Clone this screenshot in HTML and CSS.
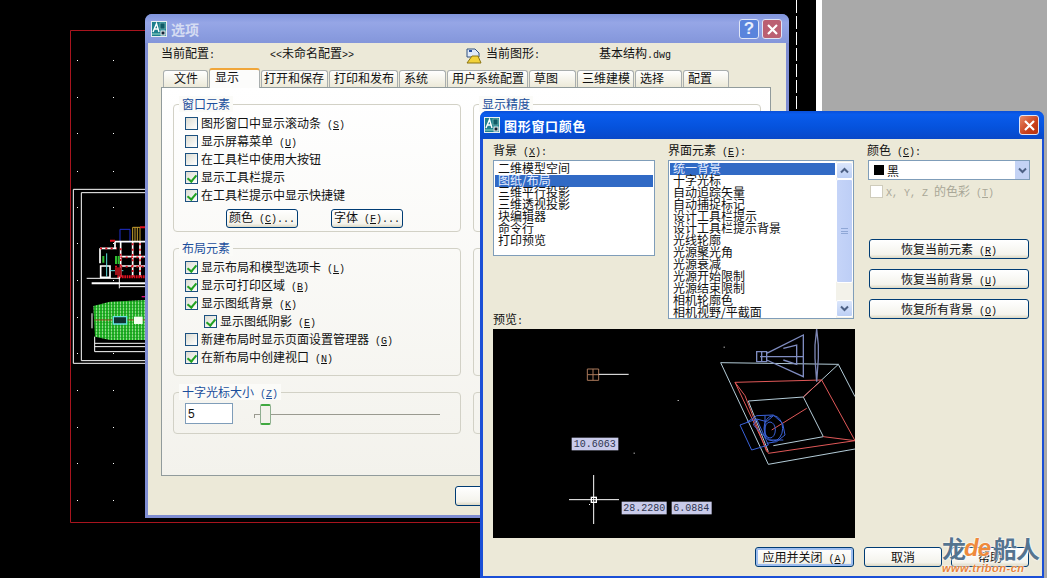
FILE: index.html
```html
<!DOCTYPE html>
<html lang="zh-CN">
<head>
<meta charset="utf-8">
<title>选项</title>
<link rel="stylesheet" href="styles.css">
</head>
<body>
<svg width="0" height="0" class="defs">
  <defs>
    <symbol id="cad" viewBox="0 0 16 16">
      <rect x="0.5" y="0.5" width="15" height="15" fill="#1d7f8c" stroke="#e8f0f0"/>
      <path d="M2 11 L5.5 2.5 L8 11 M3.5 8 H7" fill="none" stroke="#fff" stroke-width="1.4"/>
      <rect x="9" y="2" width="5" height="6" fill="#0f5a66" stroke="#8fd0c8" stroke-width=".6"/>
      <path d="M1 13 H9" stroke="#9fe0c8"/>
      <rect x="10" y="10" width="4" height="4" fill="#123" stroke="#fff"/>
    </symbol>
    <pattern id="hatch" width="9" height="9" patternUnits="userSpaceOnUse">
      <rect width="9" height="9" fill="#1fb224"/>
      <rect x="1" width="2" height="9" fill="#c4efb8"/>
      <rect y="4" width="9" height="1.5" fill="#118a18"/>
    </pattern>
  </defs>
</svg>
<main class="desktop">
  <div class="gray-side"></div>
  <svg class="cad-canvas" width="1047" height="578" viewBox="0 0 1047 578">
    <path d="M145 30.5 H70.5 V522.5 H480" fill="none" stroke="#a8141e"/>
    <path d="M796.5 0 V111" stroke="#fff" stroke-dasharray="13 3"/>
    <g fill="#fff">
      <rect x="77" y="60" width="1" height="1"/><rect x="113" y="60" width="1" height="1"/>
      <rect x="77" y="97" width="1" height="1"/><rect x="113" y="97" width="1" height="1"/>
      <rect x="77" y="133" width="1" height="1"/><rect x="113" y="133" width="1" height="1"/>
      <rect x="77" y="171" width="1" height="1"/><rect x="113" y="171" width="1" height="1"/>
      <rect x="77" y="207" width="1" height="1"/><rect x="113" y="207" width="1" height="1"/>
      <rect x="77" y="243" width="1" height="1"/><rect x="113" y="243" width="1" height="1"/>
      <rect x="77" y="280" width="1" height="1"/><rect x="113" y="280" width="1" height="1"/>
      <rect x="77" y="317" width="1" height="1"/><rect x="113" y="317" width="1" height="1"/>
      <rect x="77" y="353" width="1" height="1"/><rect x="113" y="353" width="1" height="1"/>
      <rect x="77" y="390" width="1" height="1"/><rect x="113" y="390" width="1" height="1"/>
      <rect x="77" y="427" width="1" height="1"/><rect x="113" y="427" width="1" height="1"/>
      <rect x="77" y="463" width="1" height="1"/><rect x="113" y="463" width="1" height="1"/>
      <rect x="77" y="500" width="1" height="1"/><rect x="113" y="500" width="1" height="1"/>
    </g>
    <g transform="translate(60 180) scale(.3333)" fill="none">
      <path d="M260 28 H40 V550 H260 M260 38 H64 V542 H260" stroke="#fff" stroke-width="3"/>
      <path d="M180 148 H210 V185 H180 Z" stroke="#2030d0" stroke-width="3"/>
      <path d="M218 142 H240 V185 H218 Z M225 142 V185 M232 142 V185" stroke="#c8a030" stroke-width="3"/>
      <path d="M240 142 H260 M150 182 H165" stroke="#e01020" stroke-width="6"/>
      <path d="M182 185 V290 M218 185 V290 M240 185 V290 M165 185 H260 M165 185 V205 M120 205 H170 M120 205 V250 M182 230 H260 M182 258 H260 M122 258 H150 V292 H122 Z" stroke="#fff" stroke-width="5"/>
      <path d="M120 205 H170 M182 205 V290 M218 190 V290 M240 190 V290 M165 232 H258 M165 260 H258" stroke="#e01020" stroke-width="5" stroke-dasharray="6 10"/>
      <path d="M140 220 V290 M150 272 H190" stroke="#60e0e0" stroke-width="3"/>
      <path d="M130 228 V248 M168 228 V252 M176 228 V252" stroke="#30c030" stroke-width="6"/>
      <path d="M165 262 L185 262 L185 285 L165 285 Z" fill="#a01018"/>
      <path d="M172 290 H255" stroke="#e01020" stroke-width="9" stroke-dasharray="5 2"/>
      <path d="M80 295 H180 M180 320 H255 M178 290 V325" stroke="#fff" stroke-width="3"/>
      <path d="M95 310 H255" stroke="#fff" stroke-width="6"/>
      <path d="M245 350 H260" stroke="#e01080" stroke-width="4"/>
      <path d="M100 378 L150 365 L255 360 V480 H150 L105 470 Z" fill="url(#hatch)"/>
      <path d="M104 420 H160 M200 420 H255" stroke="#d02020" stroke-width="2"/>
      <path d="M104 470 V515 M104 490 H255 M104 500 H255 M104 515 H255 M96 400 V445" stroke="#fff" stroke-width="3"/>
      <path d="M160 410 H200 V432 H160 Z" fill="#103030" stroke="#60e0e0" stroke-width="4"/>
      <rect x="222" y="410" width="26" height="22" fill="#f4fff0"/>
    </g>
  </svg>

  <section class="win win-options">
    <header class="titlebar titlebar-idle">
      <svg class="app-icon" width="16" height="16"><use href="#cad"/></svg>
      <span class="title-idle">选项</span>
      <span class="cap cap-help">?</span>
      <span class="cap cap-close-idle"><svg width="13" height="13" viewBox="0 0 13 13"><path d="M2 2 L11 11 M11 2 L2 11" stroke="#fff" stroke-width="2.2"/></svg></span>
    </header>
    <div class="win-body options-body">
      <div class="profile">
        <span><span>当前配置</span><span class="k">:</span></span>
        <span><span class="k">&lt;&lt;</span>未命名配置<span class="k">&gt;&gt;</span></span>
        <svg width="16" height="16" viewBox="0 0 16 16"><path d="M1 1 H9 L13 5 V9 H1 Z" fill="#dfe9f8" stroke="#31507f"/><path d="M3 3 H6" stroke="#2850a0" stroke-width="2"/><path d="M1 15 L6 8 H12 L15 15 Z" fill="#f2d23a" stroke="#8a7412"/></svg>
        <span><span>当前图形</span><span class="k">:</span></span>
        <span>基本结构<span class="k">.dwg</span></span>
      </div>
      <nav class="tabs">
        <span class="tab t-first">文件</span>
        <span class="tab tab-on">显示</span>
        <span class="tab t67">打开和保存</span>
        <span class="tab t69">打印和发布</span>
        <span class="tab t47">系统</span>
        <span class="tab t81">用户系统配置</span>
        <span class="tab t47">草图</span>
        <span class="tab t57">三维建模</span>
        <span class="tab t47">选择</span>
        <span class="tab t46">配置</span>
      </nav>
      <div class="panel">
        <div class="group">
          <div class="legend">窗口元素</div>
          <div class="rows">
            <label class="row"><i class="cb"></i><span>图形窗口中显示滚动条<span class="k"> (<u>S</u>)</span></span></label>
            <label class="row"><i class="cb"></i><span>显示屏幕菜单<span class="k"> (<u>U</u>)</span></span></label>
            <label class="row"><i class="cb"></i><span>在工具栏中使用大按钮</span></label>
            <label class="row"><i class="cb on"></i><span>显示工具栏提示</span></label>
            <label class="row"><i class="cb on"></i><span>在工具栏提示中显示快捷键</span></label>
          </div>
          <div class="group-btns">
            <button class="btn btn-72">颜色<span class="k"> (<u>C</u>)...</span></button>
            <button class="btn btn-72">字体<span class="k"> (<u>F</u>)...</span></button>
          </div>
        </div>
        <div class="group">
          <div class="legend">显示精度</div>
        </div>
        <div class="group">
          <div class="legend">布局元素</div>
          <div class="rows">
            <label class="row"><i class="cb on"></i><span>显示布局和模型选项卡<span class="k"> (<u>L</u>)</span></span></label>
            <label class="row"><i class="cb on"></i><span>显示可打印区域<span class="k"> (<u>B</u>)</span></span></label>
            <label class="row"><i class="cb on"></i><span>显示图纸背景<span class="k"> (<u>K</u>)</span></span></label>
            <label class="row row-sub"><i class="cb on"></i><span>显示图纸阴影<span class="k"> (<u>E</u>)</span></span></label>
            <label class="row"><i class="cb"></i><span>新建布局时显示页面设置管理器<span class="k"> (<u>G</u>)</span></span></label>
            <label class="row"><i class="cb on"></i><span>在新布局中创建视口<span class="k"> (<u>N</u>)</span></span></label>
          </div>
        </div>
        <div class="group"></div>
        <div class="group">
          <div class="legend">十字光标大小<span class="k"> (<u>Z</u>)</span></div>
          <div class="cursor-size">
            <span class="field">5</span>
            <div class="slider"><span class="thumb"></span></div>
          </div>
        </div>
        <div class="group"></div>
      </div>
      <div class="options-foot"><button class="btn btn-ok"></button></div>
    </div>
  </section>

  <section class="win win-color">
    <header class="titlebar titlebar-active">
      <svg class="app-icon" width="16" height="16"><use href="#cad"/></svg>
      <span class="title-active">图形窗口颜色</span>
      <span class="cap cap-close"><svg width="13" height="13" viewBox="0 0 13 13"><path d="M2 2 L11 11 M11 2 L2 11" stroke="#fff" stroke-width="2.2"/></svg></span>
    </header>
    <div class="win-body color-body">
      <div class="color-main">
        <div class="color-left">
          <div class="lists">
            <div class="col-bg">
              <div class="lbl">背景<span class="k"> (<u>X</u>):</span></div>
              <ul class="list list-bg">
                <li>二维模型空间</li>
                <li class="sel">图纸/布局</li>
                <li>三维平行投影</li>
                <li>三维透视投影</li>
                <li>块编辑器</li>
                <li>命令行</li>
                <li>打印预览</li>
              </ul>
            </div>
            <div class="col-el">
              <div class="lbl">界面元素<span class="k"> (<u>E</u>):</span></div>
              <div class="list-wrap">
                <ul class="list list-el">
                  <li class="sel">统一背景</li>
                  <li>十字光标</li>
                  <li>自动追踪矢量</li>
                  <li>自动捕捉标记</li>
                  <li>设计工具栏提示</li>
                  <li>设计工具栏提示背景</li>
                  <li>光线轮廓</li>
                  <li>光源聚光角</li>
                  <li>光源衰减</li>
                  <li>光源开始限制</li>
                  <li>光源结束限制</li>
                  <li>相机轮廓色</li>
                  <li>相机视野/平截面</li>
                </ul>
                <div class="scroll">
                  <span class="sb-btn"><svg width="9" height="7" viewBox="0 0 9 7"><path d="M1 5.5 L4.5 2 L8 5.5" fill="none" stroke="#4d6185" stroke-width="2"/></svg></span>
                  <span class="sb-thumb"><i></i></span>
                  <span class="sb-btn sb-last"><svg width="9" height="7" viewBox="0 0 9 7"><path d="M1 1.5 L4.5 5 L8 1.5" fill="none" stroke="#4d6185" stroke-width="2"/></svg></span>
                </div>
              </div>
            </div>
          </div>
          <div class="lbl lbl-preview">预览<span class="k">:</span></div>
          <svg class="preview" width="362" height="209" viewBox="9 12 1086 627">
            <rect x="9" y="12" width="1086" height="627" fill="#000"/>
            <g fill="#fff">
              <rect x="701" y="65" width="3" height="3"/><rect x="563" y="225" width="3" height="3"/>
              <rect x="431" y="383" width="3" height="3"/><rect x="297" y="537" width="3" height="3"/>
            </g>
            <g fill="none" stroke-width="3">
              <path d="M292 132 H326 V166 H292 Z M309 132 V166 M292 149 H326" stroke="#a9785a"/>
              <path d="M326 148 H416" stroke="#fff"/>
              <path d="M237 524 H387 M311 450 V597" stroke="#fff"/>
              <rect x="304" y="517" width="15" height="15" stroke="#fff" stroke-width="4"/>
              <path d="M692 113 L1045 118 L1095 215 M692 113 L835 418 L1095 372 M775 228 L940 216 L1000 335 L850 362 M775 228 L835 380 M940 216 L1045 118" stroke="#b4ccd8"/>
              <path d="M735 172 L995 165 L1095 347 L835 385 Z M735 172 L765 212 L830 380 M995 165 L940 216 M950 250 L845 315 M1000 335 L1095 347" stroke="#e05858"/>
              <path d="M750 300 L800 282 L835 360 L785 375 Z M770 292 L800 272 L850 270 L878 295 L885 330 L860 350 L830 355 M800 282 L830 290 L850 272 M800 282 L790 300 L835 345 L880 345 M825 272 L825 340" stroke="#3a62d8"/>
              <ellipse cx="850" cy="310" rx="28" ry="38" stroke="#3a62d8"/>
              <ellipse cx="840" cy="315" rx="16" ry="24" stroke="#3a62d8"/>
              <path d="M800 80 H830 V110 H800 Z M830 85 L940 30 V155 L830 105 M880 70 L920 60 V118 L880 105 M810 95 H940 M815 80 V110" stroke="#7f8cc0" stroke-width="4"/>
              <path d="M975 60 L980 12 L985 60 V100 L980 170 L975 100 Z" stroke="#7d86b4" stroke-width="4"/>
            </g>
            <g class="dim">
              <rect x="245" y="338" width="140" height="38"/>
              <rect x="395" y="530" width="135" height="38"/>
              <rect x="545" y="530" width="120" height="38"/>
              <text x="251" y="367">10.6063</text>
              <text x="400" y="559">28.2280</text>
              <text x="550" y="559">6.0884</text>
            </g>
          </svg>
        </div>
        <div class="color-right">
          <div class="lbl">颜色<span class="k"> (<u>C</u>):</span></div>
          <div class="combo">
            <span class="swatch"></span><span>黑</span>
            <span class="combo-btn"><svg width="9" height="7" viewBox="0 0 9 7"><path d="M1 1.5 L4.5 5 L8 1.5" fill="none" stroke="#4d6185" stroke-width="2"/></svg></span>
          </div>
          <label class="row row-off"><i class="cb cb-off"></i><span><span class="k">X, Y, Z </span>的色彩<span class="k"> (<u>T</u>)</span></span></label>
          <div class="reset-btns">
            <button class="btn">恢复当前元素<span class="k"> (<u>R</u>)</span></button>
            <button class="btn">恢复当前背景<span class="k"> (<u>U</u>)</span></button>
            <button class="btn">恢复所有背景<span class="k"> (<u>O</u>)</span></button>
          </div>
        </div>
      </div>
      <div class="color-foot">
        <button class="btn btn-default">应用并关闭<span class="k"> (<u>A</u>)</span></button>
        <button class="btn btn-cancel">取消</button>
        <button class="btn btn-help">帮助</button>
      </div>
    </div>
  </section>

  <div class="watermark">
    <div class="wm-top"><span>龙</span><b>de</b><span>船人</span></div>
    <div class="wm-url">www.tribon-cn</div>
  </div>
</main>
</body>
</html>
```
FILE: styles.css
```css
* { box-sizing: border-box; }
html, body { margin: 0; padding: 0; background: #000; }
body {
  font-family: "Noto Sans CJK SC", "Liberation Sans", sans-serif;
  font-size: 12px;
  color: #111;
  overflow: hidden;
}
.defs { position: absolute; }
.desktop { position: relative; width: 1047px; height: 578px; overflow: hidden; background: #000; }
.gray-side { position: absolute; left: 816px; top: 0; width: 231px; height: 578px; background: #a9a9a9; border-left: 6px solid #fff; }
.cad-canvas { position: absolute; left: 0; top: 0; }
.k { font-family: "Liberation Mono", monospace; font-size: 10px; white-space: pre; }

/* windows */
.win { position: absolute; display: flex; flex-direction: column; border-radius: 7px 7px 0 0; }
.win-options { left: 145px; top: 14px; width: 644px; height: 504px; background: #7f8dd2; padding: 0 3px 3px; }
.win-color { left: 480px; top: 111px; width: 564px; height: 467px; background: #1a4fd6; padding: 0 2px 2px 3px; }
.titlebar { display: flex; align-items: center; flex: none; border-radius: 7px 7px 0 0; }
.titlebar-idle { height: 29px; margin: 0 -3px; padding: 1px 7px 0 6px; background: linear-gradient(#7f94dc, #96a6e6 30%, #8b9de0 70%, #8496da); }
.titlebar-active { height: 28px; margin: 0 -2px 0 -3px; padding: 0 5px 0 4px; background: linear-gradient(#0a4fd8, #0a5cec 12%, #0552dc 60%, #0a48c8); }
.app-icon { flex: none; }
.title-idle { margin-left: 4px; font-size: 14px; font-weight: 700; color: #d5dcf2; }
.title-active { margin-left: 4px; font-size: 13px; font-weight: 700; color: #fff; letter-spacing: .7px; }
.cap { width: 20px; height: 20px; display: flex; align-items: center; justify-content: center; border: 1px solid #dfe5f6; border-radius: 3px; }
.cap-help { margin-left: auto; margin-right: 3px; background: #5a84dc; color: #e8eefc; font: 700 17px "Liberation Sans", sans-serif; }
.cap-close-idle { background: #bb5f72; }
.cap-close { margin-left: auto; background: linear-gradient(135deg, #e88a68, #c8401c 60%, #b63210); }
.win-body { flex: 1; background: #ece9d8; min-height: 0; }

/* options dialog */
.options-body { padding: 5px 14px 0 13px; }
.profile { display: grid; grid-template-columns: 109px 196px 20px 113px 1fr; align-items: center; height: 16px; line-height: 14px; }
.profile > span { margin-top: -3px; }
.profile svg { margin-top: -1px; }
.tabs { display: flex; align-items: flex-end; height: 19px; margin-top: 4px; padding-left: 2px; }
.tab { height: 17px; padding-left: 4px; line-height: 14px; text-align: left; border: 1px solid #a9aeae; border-bottom: 0; border-radius: 3px 3px 0 0; background: linear-gradient(#fff, #ece9d8); margin-right: 1px; white-space: nowrap; }
.t-first { width: 45px; padding-left: 10px; }
.t46 { width: 46px; } .t47 { width: 47px; } .t57 { width: 57px; } .t67 { width: 67px; padding-left: 2px; } .t69 { width: 69px; } .t81 { width: 81px; }
.tab-on { position: relative; z-index: 1; width: 51px; height: 20px; margin-bottom: -1px; padding-left: 5px; line-height: 13px; background: #fcfcfb; border-top: 2px solid #f0a63a; }
.panel {
  display: grid;
  grid-template-columns: 288px 288px;
  grid-template-rows: 128px 128px 42px;
  gap: 16px 12px;
  width: 610px;
  height: 389px;
  padding: 16px 0 0 11px;
  border: 1px solid #919b9c;
  background: linear-gradient(#fff, #f3f2ec);
}
.group { border: 1px solid #d2d1c6; border-radius: 4px; min-width: 0; }
.legend { width: fit-content; height: 16px; margin: -9px 0 0 5px; padding: 0 3px; line-height: 15px; color: #1c4f9c; background: #fbfbf8; }
.rows { margin-top: 2px; }
.row { display: flex; align-items: center; height: 18px; padding-left: 11px; white-space: pre; }
.row > span { margin-top: -2px; }
.row-sub { padding-left: 30px; }
.cb { position: relative; flex: none; display: block; width: 13px; height: 13px; margin-right: 3px; border: 1px solid #1c5180; background: linear-gradient(135deg, #dcdcd2, #fff); }
.cb.on::after { content: ""; position: absolute; left: 3px; top: 1px; width: 4px; height: 7px; border: solid #21a121; border-width: 0 2px 2px 0; transform: rotate(40deg); }
.cb-off { border-color: #cfccbc; background: #fff; }
.group-btns { display: flex; gap: 33px; margin: 5px 0 0 52px; }
.btn { display: block; padding: 0 0 2px; height: 20px; color: #111; font: inherit; border: 1px solid #003c74; border-radius: 3px; background: linear-gradient(#fff, #f4f3ec 80%, #dcd8c4); white-space: pre; }
.btn-72 { width: 72px; height: 19px; line-height: 13px; }
.cursor-size { display: flex; align-items: flex-start; margin: 3px 0 0 11px; }
.field { width: 48px; height: 21px; padding-left: 2px; line-height: 20px; font-family: "Liberation Sans", sans-serif; border: 1px solid #7f9db9; background: #fff; }
.slider { position: relative; width: 186px; height: 1px; margin: 11px 0 0 21px; background: #9a9a90; }
.slider::before { content: ""; position: absolute; left: 0; top: 0; width: 1px; height: 4px; background: #9a9a90; }
.thumb { position: absolute; left: 6px; top: -10px; width: 11px; height: 21px; border: 1px solid #8fae8f; border-width: 2px 1px; border-top-color: #3fa83f; border-bottom-color: #3fa83f; border-radius: 2px; background: #f2f1ea; }
.options-foot { margin: 10px 0 0 294px; }
.btn-ok { width: 90px; }

/* colour dialog */
.color-body { display: flex; flex-direction: column; padding: 5px 0 0 10px; }
.color-main { display: flex; }
.color-left { width: 374px; }
.lists { display: flex; gap: 13px; }
.col-bg { width: 162px; }
.col-el { width: 186px; }
.lbl { height: 16px; line-height: 12px; white-space: pre; }
.list { list-style: none; margin: 0; padding: 2px 1px 0 1px; background: #fff; }
.list li { height: 12px; line-height: 10px; padding-left: 3px; white-space: nowrap; }
.list .sel { background: #316ac5; color: #e6eeff; }
.list-bg { height: 96px; border: 1px solid #7f9db9; }
.list-wrap { display: flex; height: 159px; border: 1px solid #7f9db9; background: #fff; }
.list-el { flex: 1; }
.scroll { display: flex; flex-direction: column; width: 17px; padding: 1px 0; background: #f3f2ea; }
.sb-btn { display: flex; align-items: center; justify-content: center; width: 17px; height: 17px; background: linear-gradient(#dbe6fb, #bccff5); border: 1px solid #fff; border-radius: 2px; }
.sb-thumb { display: flex; align-items: center; justify-content: center; width: 17px; height: 104px; background: linear-gradient(90deg, #c5d4f8, #bdcef6); border: 1px solid #fff; border-radius: 2px; }
.sb-thumb i { width: 7px; height: 6px; border-top: 1px solid #8fa7d6; border-bottom: 1px solid #8fa7d6; background: linear-gradient(#8fa7d6, #8fa7d6) center / 100% 1px no-repeat; }
.sb-last { margin-top: auto; }
.lbl-preview { margin-top: -6px; height: 16px; }
.preview { display: block; }
.dim rect { fill: #c9cbea; stroke: none; }
.dim text { fill: #2d3550; stroke: none; font-family: "Liberation Mono", monospace; font-size: 30px; }
.color-right { width: 163px; }
.combo { display: flex; align-items: center; gap: 3px; width: 162px; height: 20px; margin-left: 1px; padding-left: 5px; border: 1px solid #7f9db9; background: #fff; }
.swatch { width: 10px; height: 10px; background: #000; }
.combo-btn { display: flex; align-items: center; justify-content: center; width: 15px; height: 18px; margin-left: auto; background: #c4d3f5; border-left: 1px solid #fff; }
.row-off { margin-top: 3px; height: 16px; padding-left: 3px; color: #a9a797; }
.reset-btns { display: flex; flex-direction: column; gap: 10px; margin-top: 40px; padding-left: 2px; }
.reset-btns .btn { width: 160px; }
.color-foot { display: flex; gap: 10px; margin: 9px 0 0 262px; }
.btn-default { width: 99px; box-shadow: inset 0 0 0 2px #9dbdf0; }
.btn-cancel { width: 78px; }
.btn-help { width: 78px; margin-left: -1px; }

/* watermark */
.watermark { position: absolute; left: 942px; top: 535px; width: 100px; text-shadow: 0 0 2px #fff, 0 0 2px #fff; }
.wm-top { display: flex; align-items: center; height: 26px; color: #55748f; font-size: 24px; font-weight: 700; line-height: 26px; letter-spacing: -1px; }
.wm-top b { margin-left: -1px; margin-right: 3px; color: #ee8a3c; font: italic 700 24px "Liberation Sans", sans-serif; }
.wm-url { margin-top: 1px; color: #e8843a; font: italic 700 11px "Liberation Sans", sans-serif; letter-spacing: .5px; }
```
